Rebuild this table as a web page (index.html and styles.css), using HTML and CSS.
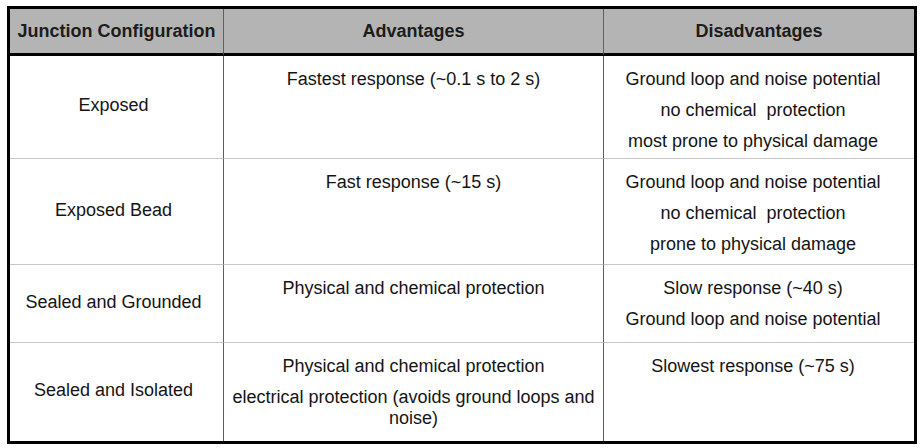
FILE: index.html
```html
<!DOCTYPE html>
<html lang="en">
<head>
<meta charset="utf-8">
<title>Thermocouple Junction Configurations</title>
<link rel="stylesheet" href="styles.css">
</head>
<body>
<div class="frame">
  <table class="junctions">
    <colgroup>
      <col class="c1">
      <col class="c2">
      <col class="c3">
    </colgroup>
    <thead>
      <tr>
        <th>Junction Configuration</th>
        <th>Advantages</th>
        <th>Disadvantages</th>
      </tr>
    </thead>
    <tbody>
      <tr class="r1">
        <td class="name">Exposed</td>
        <td class="list"><p>Fastest response (~0.1 s to 2 s)</p></td>
        <td class="list last"><p>Ground loop and noise potential</p><p>no chemical&nbsp; protection</p><p>most prone to physical damage</p></td>
      </tr>
      <tr class="r2">
        <td class="name">Exposed Bead</td>
        <td class="list"><p>Fast response (~15 s)</p></td>
        <td class="list last"><p>Ground loop and noise potential</p><p>no chemical&nbsp; protection</p><p>prone to physical damage</p></td>
      </tr>
      <tr class="r3">
        <td class="name">Sealed and Grounded</td>
        <td class="list"><p>Physical and chemical protection</p></td>
        <td class="list last"><p>Slow response (~40 s)</p><p>Ground loop and noise potential</p></td>
      </tr>
      <tr class="r4">
        <td class="name">Sealed and Isolated</td>
        <td class="list"><p>Physical and chemical protection</p><p>electrical protection (avoids ground loops and noise)</p></td>
        <td class="list last"><p>Slowest response (~75 s)</p></td>
      </tr>
    </tbody>
  </table>
</div>
</body>
</html>
```

FILE: styles.css
```css
html, body {
  margin: 0;
  padding: 0;
  background: #ffffff;
}

body {
  padding: 6px 0 0 7px;
  font-family: "Liberation Sans", Arial, sans-serif;
  font-size: 18px;
  color: #141414;
}

.frame {
  width: 904px;
  border: 3px solid #000000;
}

.junctions {
  width: 904px;
  table-layout: fixed;
  border-collapse: separate;
  border-spacing: 0;
}

.c1 { width: 214px; }
.c2 { width: 380px; }
.c3 { width: 310px; }

.junctions th {
  background: #b4b4b4;
  color: #1c1c1c;
  font-weight: bold;
  font-size: 18px;
  line-height: 43px;
  height: 43px;
  padding: 1px 0 0 0;
  text-align: center;
  border-bottom: 3px solid #000000;
}

.junctions th:not(:last-child),
.junctions td:not(:last-child) {
  border-right: 1px solid #5f5f5f;
}

.junctions td {
  padding: 0;
  text-align: center;
  border-top: 1px solid #c6c6c6;
}

.junctions tbody tr:first-child td {
  border-top: none;
}

.r1 { height: 102px; }
.r2 { height: 106px; }
.r3 { height: 78px; }
.r4 { height: 99px; }

.name {
  vertical-align: middle;
  padding: 0 10px 3px 4px !important;
  line-height: 21px;
}

.list {
  vertical-align: top;
  padding: 13px 8px 0 8px !important;
}

.list.last {
  padding-right: 20px !important;
}

.list p {
  margin: 0 0 10px 0;
  line-height: 21px;
}

.list p:last-child {
  margin-bottom: 0;
}
```
